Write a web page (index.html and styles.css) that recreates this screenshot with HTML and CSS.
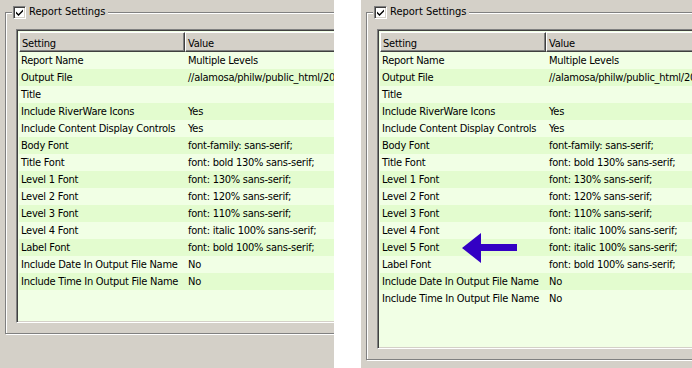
FILE: index.html
```html
<!DOCTYPE html>
<html>
<head>
<meta charset="utf-8">
<link rel="stylesheet" href="styles.css">
</head>
<body>
<div class="shots">
  <div class="panel panel-left">
    <fieldset class="group">
      <legend class="legend"><span class="check"><svg width="9" height="9" viewBox="0 0 9 9"><path d="M1 3.5 L3.5 6 L8 1.5 L8 3.5 L3.5 8 L1 5.5 Z" fill="#000"/></svg></span><span class="legend-text">Report Settings</span></legend>
      <div class="table table-left">
        <div class="head"><div class="hcell c1">Setting</div><div class="hcell c2">Value</div></div>
        <div class="row"><div class="c1">Report Name</div><div class="c2">Multiple Levels</div></div>
        <div class="row"><div class="c1">Output File</div><div class="c2">//alamosa/philw/public_html/20</div></div>
        <div class="row"><div class="c1">Title</div><div class="c2"></div></div>
        <div class="row"><div class="c1">Include RiverWare Icons</div><div class="c2">Yes</div></div>
        <div class="row"><div class="c1">Include Content Display Controls</div><div class="c2">Yes</div></div>
        <div class="row"><div class="c1">Body Font</div><div class="c2">font-family: sans-serif;</div></div>
        <div class="row"><div class="c1">Title Font</div><div class="c2">font: bold 130% sans-serif;</div></div>
        <div class="row"><div class="c1">Level 1 Font</div><div class="c2">font: 130% sans-serif;</div></div>
        <div class="row"><div class="c1">Level 2 Font</div><div class="c2">font: 120% sans-serif;</div></div>
        <div class="row"><div class="c1">Level 3 Font</div><div class="c2">font: 110% sans-serif;</div></div>
        <div class="row"><div class="c1">Level 4 Font</div><div class="c2">font: italic 100% sans-serif;</div></div>
        <div class="row"><div class="c1">Label Font</div><div class="c2">font: bold 100% sans-serif;</div></div>
        <div class="row"><div class="c1">Include Date In Output File Name</div><div class="c2">No</div></div>
        <div class="row"><div class="c1">Include Time In Output File Name</div><div class="c2">No</div></div>
      </div>
    </fieldset>
  </div>
  <div class="panel panel-right">
    <fieldset class="group">
      <legend class="legend"><span class="check"><svg width="9" height="9" viewBox="0 0 9 9"><path d="M1 3.5 L3.5 6 L8 1.5 L8 3.5 L3.5 8 L1 5.5 Z" fill="#000"/></svg></span><span class="legend-text">Report Settings</span></legend>
      <div class="table table-right">
        <div class="head"><div class="hcell c1">Setting</div><div class="hcell c2">Value</div></div>
        <div class="row"><div class="c1">Report Name</div><div class="c2">Multiple Levels</div></div>
        <div class="row"><div class="c1">Output File</div><div class="c2">//alamosa/philw/public_html/20</div></div>
        <div class="row"><div class="c1">Title</div><div class="c2"></div></div>
        <div class="row"><div class="c1">Include RiverWare Icons</div><div class="c2">Yes</div></div>
        <div class="row"><div class="c1">Include Content Display Controls</div><div class="c2">Yes</div></div>
        <div class="row"><div class="c1">Body Font</div><div class="c2">font-family: sans-serif;</div></div>
        <div class="row"><div class="c1">Title Font</div><div class="c2">font: bold 130% sans-serif;</div></div>
        <div class="row"><div class="c1">Level 1 Font</div><div class="c2">font: 130% sans-serif;</div></div>
        <div class="row"><div class="c1">Level 2 Font</div><div class="c2">font: 120% sans-serif;</div></div>
        <div class="row"><div class="c1">Level 3 Font</div><div class="c2">font: 110% sans-serif;</div></div>
        <div class="row"><div class="c1">Level 4 Font</div><div class="c2">font: italic 100% sans-serif;</div></div>
        <div class="row"><div class="c1">Level 5 Font</div><div class="c2">font: italic 100% sans-serif;</div></div>
        <div class="row"><div class="c1">Label Font</div><div class="c2">font: bold 100% sans-serif;</div></div>
        <div class="row"><div class="c1">Include Date In Output File Name</div><div class="c2">No</div></div>
        <div class="row"><div class="c1">Include Time In Output File Name</div><div class="c2">No</div></div>
      </div>
    </fieldset>
    <svg class="arrow" width="56" height="32" viewBox="0 0 56 32"><path d="M0 15 L19 0 L19 11 L55 11 L55 18 L19 18 L19 30 Z" fill="#3300c4"/></svg>
  </div>
</div>
</body>
</html>
```
FILE: styles.css
```css
html, body {
  margin: 0;
  padding: 0;
  background: #ffffff;
}
body {
  font-family: "DejaVu Sans Condensed", "DejaVu Sans", sans-serif;
  font-stretch: condensed;
  font-size: 11px;
  color: #000;
}
.shots {
  display: flex;
  gap: 27px;
  height: 368px;
}
.panel {
  position: relative;
  background: #d4d0c8;
  overflow: hidden;
  height: 368px;
}
.panel-left { width: 334px; }
.panel-right { width: 331px; }

.group {
  margin: 5px 0 0 5px;
  width: 360px;
  padding: 0 0 10px 10px;
  border: 1px solid #808080;
  box-shadow: inset 1px 1px 0 #fff, 1px 1px 0 #fff;
  min-inline-size: 0;
  box-sizing: border-box;
}
.legend {
  margin-left: -4px;
  padding: 0 2px 0 1px;
  height: 14px;
  display: flex;
  align-items: center;
  gap: 3px;
  background: #d4d0c8;
}
.check {
  width: 13px;
  height: 13px;
  box-sizing: border-box;
  background: #fff;
  border-top: 1px solid #808080;
  border-left: 1px solid #808080;
  border-right: 1px solid #fff;
  border-bottom: 1px solid #fff;
  box-shadow: inset 1px 1px 0 #404040, inset -1px -1px 0 #d4d0c8;
  display: flex;
  align-items: center;
  justify-content: center;
}
.check svg { display: block; }
.legend-text { line-height: 14px; }

.table {
  margin-top: 10px;
  border-top: 1px solid #808080;
  border-left: 1px solid #808080;
  border-bottom: 1px solid #fff;
  box-shadow: inset 1px 1px 0 #404040, inset 0 -1px 0 #d4d0c8;
  padding: 2px 0 1px 2px;
  background: #f1ffe5;
  box-sizing: border-box;
  width: 400px;
  letter-spacing: -0.25px;
}
.table-left { height: 294px; }
.table-right { height: 320px; }

.head {
  display: flex;
  height: 20px;
}
.hcell {
  box-sizing: border-box;
  background: #d4d0c8;
  border-top: 1px solid #fff;
  border-left: 1px solid #fff;
  border-bottom: 1px solid #404040;
  border-right: 1px solid #404040;
  box-shadow: inset -1px -1px 0 #808080;
  padding: 4px 0 0 2px;
  line-height: 13px;
}
.head .c1 { width: 166px; }
.head .c2 { flex: 1; }

.row {
  display: flex;
  height: 17px;
  line-height: 17px;
  white-space: nowrap;
}
.row:nth-child(odd) { background: #e3fccf; }
.row .c1 { width: 166px; padding-left: 2px; box-sizing: border-box; }
.row .c2 { flex: 1; padding-left: 3px; }

.arrow {
  position: absolute;
  left: 101px;
  top: 233px;
}
```
